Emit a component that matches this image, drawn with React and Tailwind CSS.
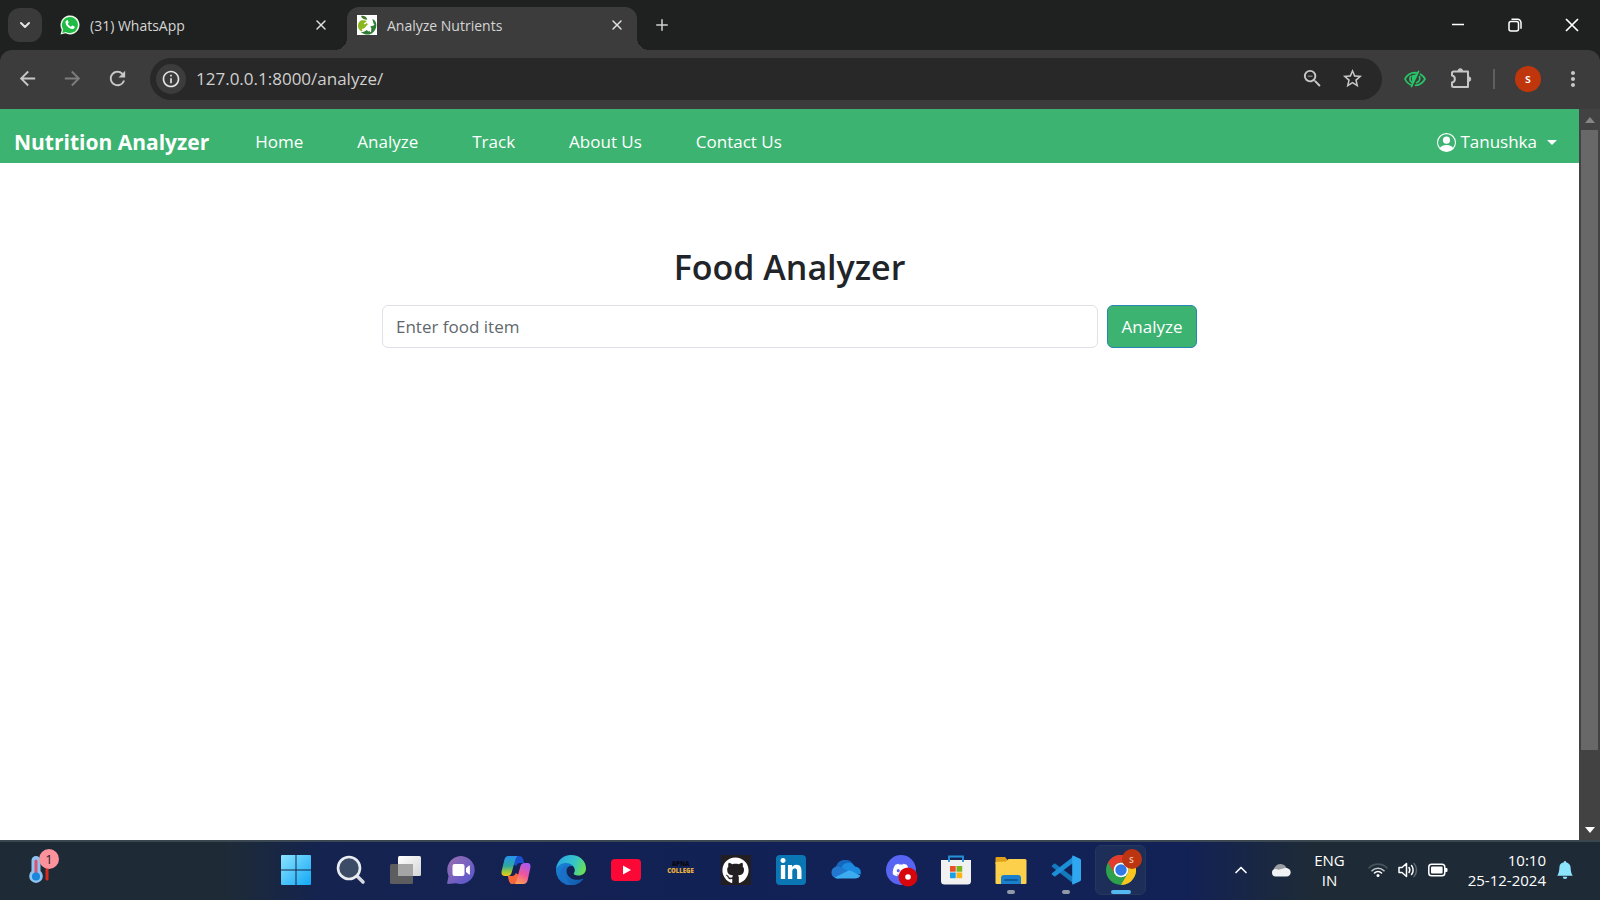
import React from "react";
import { BsPersonCircle, BsBellFill } from "react-icons/bs";
import { FaGithub, FaDiscord, FaLinkedinIn } from "react-icons/fa";
import {
  MdArrowBack,
  MdArrowForward,
  MdRefresh,
  MdZoomOut,
  MdStarOutline,
  MdMoreVert,
  MdInfoOutline,
} from "react-icons/md";
import { ChevronDown, ChevronUp, X, Plus } from "lucide-react";

function WhatsAppIcon() {
  return (
    <svg viewBox="0 0 20 20" className="size-5 shrink-0" aria-hidden="true">
      <path d="M0.5 19.5 1.8 14.7A9.5 9.5 0 1 1 5.4 18.2Z" fill="#e9fbe9" />
      <path d="M2.2 17.9 3.2 14.4A8 8 0 1 1 5.8 16.9Z" fill="#1fbb45" />
      <path
        d="M6.8 5.3c.3-.3.8-.3 1 .1l.8 1.8c.1.3 0 .5-.2.8l-.6.7c.7 1.4 1.8 2.4 3.3 3l.8-1c.2-.2.4-.3.7-.2l1.8.9c.3.1.4.3.3.6-.1 1.4-1.3 2.2-2.5 2.1-3.2-.4-6.300-3.400-6.700-6.300-.1-1 .5-2 1.300-2.500z"
        fill="#fff"
      />
    </svg>
  );
}

function RunnerAppleIcon() {
  return (
    <svg viewBox="0 0 20 20" className="size-5 shrink-0" aria-hidden="true">
      <rect width="20" height="20" fill="#fff" />
      <path d="M4 .8c3.200-.6 5.700 1 6.300 3.800C7 5 4.500 3.600 4 .8z" fill="#3c7a2a" />
      <path d="M1 11C1 7 3.500 5 6 5.200c2 .1 3 .6 4 .4L8.500 7.500 11 9l-3 3.500L4.500 16.500C2.500 15.500 1 13.500 1 11z" fill="#8ab61f" />
      <path d="M15.300 4c3 1 4.400 4 4 7-.4 4-3.500 7.800-7 8.500-3 .3-6-.3-8.300-2.500 2 .2 4-.5 5.500-2l2 1.500 2.500-1-.5-4 3.500-1.500z" fill="#2d7d32" />
      <circle cx="13.300" cy="5" r="1.500" fill="#fff" />
      <path
        d="M7.500 8.700 9.800 7.200l2.700 1-1.500 3.400 2.700 1.600-.2 3.300M10.800 11.500 9 13.800l-3.500.5M12.700 8.400l1.500 1.600 2.500-.5"
        fill="none"
        stroke="#fff"
        strokeWidth="1.3"
        strokeLinecap="round"
        strokeLinejoin="round"
      />
    </svg>
  );
}

function PuzzleIcon() {
  return (
    <svg viewBox="0 0 24 24" className="size-6" fill="none" stroke="currentColor" strokeWidth="2" strokeLinejoin="round" aria-hidden="true">
      <path d="M4.500 4.500h14.500v15.500H4.500a1.500 1.500 0 0 1-1.500-1.500v-3c3.800-.6 3.800-6.400 0-7V6a1.500 1.500 0 0 1 1.500-1.500z" />
      <path d="M9 4a2.300 2.300 0 0 1 4.600 0zM19.500 9.800a2.300 2.300 0 0 1 0 4.600z" fill="currentColor" strokeWidth="1" />
    </svg>
  );
}

function Tab({ icon, title, active }) {
  return (
    <div
      className={
        active
          ? "flex h-[43px] w-[290px] items-start rounded-t-xl bg-[#3c3c3c] pl-2.5 pr-2.5 pt-2"
          : "flex h-[43px] w-[279px] items-start pl-1 pr-1 pt-2"
      }
    >
      {icon}
      <button type="button" className="ml-2.5 flex-1 text-left text-sm leading-[22px] text-[#d5d5d5]">
        {title}
      </button>
      <button type="button" aria-label={"Close " + title} className="flex size-5 items-center justify-center text-[#e0e0e0]">
        <X className="size-4" strokeWidth={2.2} />
      </button>
    </div>
  );
}

function TabStrip() {
  return (
    <header className="flex h-[50px] items-end bg-[#1f2120]">
      <button
        type="button"
        aria-label="Search tabs"
        className="ml-2 mb-2 flex size-[34px] items-center justify-center rounded-xl bg-[#3a3a3a] text-[#e3e3e3]"
      >
        <ChevronDown className="size-4" strokeWidth={3} />
      </button>
      <div className="ml-3.5 flex items-end">
        <Tab icon={<WhatsAppIcon />} title="(31) WhatsApp" />
        <span className="size-3 bg-[radial-gradient(circle_at_0_0,transparent_12px,#3c3c3c_12px)]" />
        <Tab icon={<RunnerAppleIcon />} title="Analyze Nutrients" active />
        <span className="size-3 bg-[radial-gradient(circle_at_100%_0,transparent_12px,#3c3c3c_12px)]" />
      </div>
      <button type="button" aria-label="New tab" className="mb-4 ml-1 flex size-[18px] items-center justify-center text-[#d0d0d0]">
        <Plus className="size-[18px] shrink-0" strokeWidth={2} />
      </button>
      <div className="ml-auto flex h-[50px] text-white">
        <button type="button" aria-label="Minimize" className="flex w-[57px] items-center justify-center">
          <svg viewBox="0 0 14 14" className="size-3.5" fill="none" stroke="currentColor" strokeWidth="1.5">
            <path d="M1 6.500h12" />
          </svg>
        </button>
        <button type="button" aria-label="Restore" className="flex w-[57px] items-center justify-center">
          <svg viewBox="0 0 14 14" className="size-3.5" fill="none" stroke="currentColor" strokeWidth="1.5">
            <rect x="1" y="3.500" width="9.500" height="9.500" rx="2" />
            <path d="M3.500 1.200h6A3.500 3.500 0 0 1 13 4.700v6" />
          </svg>
        </button>
        <button type="button" aria-label="Close window" className="flex w-[57px] items-center justify-center">
          <svg viewBox="0 0 14 14" className="size-3.5" fill="none" stroke="currentColor" strokeWidth="1.7">
            <path d="M1 1l12 12M13 1 1 13" />
          </svg>
        </button>
      </div>
    </header>
  );
}

function Toolbar() {
  return (
    <div className="bg-[#1f2120]">
      <div className="flex h-[59px] items-center rounded-t-xl bg-[#3c3c3c] pb-0.5 pl-4 pr-[15px] text-[#c7c7c7]">
        <div className="flex items-center gap-[22px]">
          <button type="button" aria-label="Back"><MdArrowBack className="size-[23px]" /></button>
          <button type="button" aria-label="Forward" className="text-[#7d7d7d]"><MdArrowForward className="size-[23px]" /></button>
          <button type="button" aria-label="Reload"><MdRefresh className="size-[23px]" /></button>
        </div>
        <div className="ml-[21px] flex h-[42px] flex-1 items-center rounded-full bg-[#282828] pl-1.5 pr-[18px]">
          <button type="button" aria-label="Site information" className="flex size-[30px] items-center justify-center rounded-full bg-[#3c3c3c] text-[#e3e3e3]">
            <MdInfoOutline className="size-5" />
          </button>
          <input
            type="text"
            aria-label="Address"
            defaultValue="127.0.0.1:8000/analyze/"
            className="ml-2.5 min-w-0 flex-1 bg-transparent text-[17px] leading-6 text-[#d0d0d0] outline-none"
          />
          <button type="button" aria-label="Zoom"><MdZoomOut className="size-[23px]" /></button>
          <button type="button" aria-label="Bookmark" className="ml-[17px]"><MdStarOutline className="size-[23px]" /></button>
        </div>
        <div className="ml-[22px] flex items-center">
          <button type="button" aria-label="Hide extension">
            <svg viewBox="0 0 22 18" className="h-[18px] w-[22px]" fill="none" stroke="#27c768" strokeWidth="1.7" strokeLinecap="round">
              <path d="M8 15.300C4.500 14.300 2.300 11.800 1 9 3.200 4.800 6.800 2.600 11 2.600l2 .2" />
              <path d="M16.500 4.200C18.600 5.400 20 7 21 9c-2.200 4-5.500 6.200-9.500 6.400" />
              <path d="M6.500 6.500c-1 2.200-.5 4.600 1.500 6" />
              <path d="M15.500 6.500c.8 2.700-.5 5.300-3 6.200" />
              <path d="M7.500 5.500 13 4 8.500 14z" fill="#27c768" stroke="none" />
              <path d="M14.500 1.500 7.500 16.500" />
            </svg>
          </button>
          <button type="button" aria-label="Extensions" className="ml-[23px]"><PuzzleIcon /></button>
          <span className="ml-5 h-5 w-0.5 bg-[#5f5f5f]" />
          <button type="button" aria-label="Profile" className="ml-5 flex size-[26px] items-center justify-center rounded-full bg-[#c0360c] text-xs font-semibold leading-4 text-white">
            s
          </button>
          <button type="button" aria-label="Menu" className="ml-5"><MdMoreVert className="size-6" /></button>
        </div>
      </div>
    </div>
  );
}

const NAV_ITEMS = ["Home", "Analyze", "Track", "About Us", "Contact Us"];

function SiteNav() {
  return (
    <nav className="flex h-[54px] items-center bg-[#3cb371] pl-3.5 pr-[22px] pt-3 text-white">
      <a href="#brand" className="whitespace-nowrap text-[21px] font-bold leading-8">Nutrition Analyzer</a>
      <ul className="ml-[46px] flex items-center gap-[54px]">
        {NAV_ITEMS.map((item) => (
          <li key={item}>
            <a href="#nav" className="whitespace-nowrap text-[17px] leading-7">{item}</a>
          </li>
        ))}
      </ul>
      <button type="button" className="ml-auto flex items-center text-[17px] leading-7">
        <BsPersonCircle className="mr-1 size-[19px]" />
        Tanushka
        <svg viewBox="0 0 10 5" className="ml-2.5 h-[5px] w-2.5" aria-hidden="true">
          <path d="M0 0h10L5 5z" fill="currentColor" />
        </svg>
      </button>
    </nav>
  );
}

function Analyzer() {
  return (
    <section className="mx-auto w-full max-w-[815px] pt-20">
      <h1 className="text-center text-[34px] font-semibold leading-[48px] text-[#212529]">Food Analyzer</h1>
      <form className="mt-3.5 flex gap-[9px]" onSubmit={(e) => e.preventDefault()}>
        <input
          type="text"
          aria-label="Food item"
          placeholder="Enter food item"
          className="h-[43px] min-w-0 flex-1 rounded-md border border-[#dee2e6] px-[13px] text-[17px] leading-7 text-[#212529] outline-none placeholder:text-[#62676c]"
        />
        <button type="submit" className="h-[43px] w-[90px] rounded-md border border-[#2a86b0] bg-[#3cb371] text-[17px] leading-7 text-white">
          Analyze
        </button>
      </form>
    </section>
  );
}

function ScrollBar() {
  return (
    <div className="flex w-[21px] flex-col items-center bg-[#424242]">
      <button type="button" aria-label="Scroll up" className="flex h-[21px] w-full items-center justify-center">
        <svg viewBox="0 0 10 6" className="h-1.5 w-2.5"><path d="M0 6h10L5 0z" fill="#858585" /></svg>
      </button>
      <div className="flex w-[17px] flex-1 flex-col">
        <div className="h-[90%] bg-[#686868]" />
      </div>
      <button type="button" aria-label="Scroll down" className="flex h-[21px] w-full items-center justify-center">
        <svg viewBox="0 0 10 6" className="h-1.5 w-2.5"><path d="M0 0h10L5 6z" fill="#fff" /></svg>
      </button>
    </div>
  );
}

function StartIcon() {
  return (
    <svg viewBox="0 0 30 30" className="size-[30px]">
      <defs>
        <linearGradient id="start" x1="0" y1="0" x2="1" y2="1">
          <stop offset="0" stopColor="#8be3ff" />
          <stop offset="1" stopColor="#12a8f5" />
        </linearGradient>
      </defs>
      <path d="M1 0h13.500v14.500H0V1a1 1 0 0 1 1-1zM15.500 0H29a1 1 0 0 1 1 1v13.500H15.500zM0 15.500h14.500V30H1a1 1 0 0 1-1-1zM15.500 15.500H30V29a1 1 0 0 1-1 1H15.500z" fill="url(#start)" />
    </svg>
  );
}

function SearchIcon() {
  return (
    <svg viewBox="0 0 30 30" className="size-[30px]">
      <path d="m20 20 7 7" stroke="#d5d9e0" strokeWidth="3.6" strokeLinecap="round" />
      <circle cx="13" cy="13" r="11" fill="#3d4c66" stroke="#e9ecf1" strokeWidth="2.6" />
    </svg>
  );
}

function TaskViewIcon() {
  return (
    <svg viewBox="0 0 31 30" className="h-[30px] w-[31px]">
      <defs>
        <linearGradient id="tvf" x1="0" y1="0" x2="1" y2="1">
          <stop offset="0" stopColor="#fff" />
          <stop offset="1" stopColor="#d5d5d5" />
        </linearGradient>
      </defs>
      <rect x="0" y="9" width="23" height="20" rx="1.5" fill="#5d5d60" />
      <rect x="8" y="1" width="23" height="20" rx="1.5" fill="url(#tvf)" />
      <path d="M8 9h15v12H9.500A1.500 1.500 0 0 1 8 19.500z" fill="#a5a5a6" />
    </svg>
  );
}

function MeetIcon() {
  return (
    <svg viewBox="0 0 30 30" className="size-[30px]">
      <defs>
        <linearGradient id="meet" x1="0" y1="0" x2="1" y2="1">
          <stop offset="0" stopColor="#9a6fb0" />
          <stop offset="1" stopColor="#5454cf" />
        </linearGradient>
      </defs>
      <path d="M15 1a14 14 0 1 1-5 27.200L2 29c-.8 0-1-.6-.8-1.200L2.600 21A14 14 0 0 1 15 1z" fill="url(#meet)" />
      <rect x="6.500" y="9" width="12" height="12" rx="2" fill="#fff" />
      <path d="M20 13.200 23 10.600c.5-.3.900-.1.900.5v8c0 .6-.4.8-.9.500L20 17z" fill="#fff" />
    </svg>
  );
}

function CopilotIcon() {
  return (
    <svg viewBox="0 0 30 28" className="h-[28px] w-[30px]">
      <defs>
        <linearGradient id="cpa" x1="0" y1="0" x2="0" y2="1">
          <stop offset="0" stopColor="#2693ee" />
          <stop offset="0.5" stopColor="#2ea8a0" />
          <stop offset="0.8" stopColor="#a3ca35" />
          <stop offset="1" stopColor="#f2c41c" />
        </linearGradient>
        <linearGradient id="cpb" x1="0.7" y1="0" x2="0.3" y2="1">
          <stop offset="0" stopColor="#a95af0" />
          <stop offset="0.5" stopColor="#f0559c" />
          <stop offset="1" stopColor="#ffa052" />
        </linearGradient>
      </defs>
      <path d="M18 0c2.500 0 3.500 1.200 4.200 3.600L23.200 7H19c-2 0-3 .8-3.600 3L12 8l1-6z" fill="#1a4fd0" />
      <path d="M12 28c-2.500 0-3.500-1.200-4.200-3.600L6.800 20H11c2 0 3-.8 3.600-3l3.400 2-1 7z" fill="#f5663b" />
      <path d="M7.500 0H18c-2 0-3 1.500-3.600 3.600L10.500 17c-.8 2.200-2 3-4 3H4C.8 20 0 18 .7 15L3.300 4C4 1.300 5.200 0 7.500 0z" fill="url(#cpa)" />
      <path d="M22.500 28H12c2 0 3-1.500 3.600-3.600L19.500 10c.8-2.200 2-3 4-3H26c3.200 0 4 2 3.300 5l-2.600 12c-.7 2.700-1.900 4-4.200 4z" fill="url(#cpb)" />
    </svg>
  );
}

function EdgeIcon() {
  return (
    <svg viewBox="0 0 30 30" className="size-[30px]">
      <defs>
        <linearGradient id="edt" x1="0" y1="0.3" x2="1" y2="0.6">
          <stop offset="0" stopColor="#2aa7e8" />
          <stop offset="0.6" stopColor="#36c6c4" />
          <stop offset="1" stopColor="#6be052" />
        </linearGradient>
        <linearGradient id="edb" x1="0" y1="0" x2="1" y2="1">
          <stop offset="0" stopColor="#1a86dc" />
          <stop offset="1" stopColor="#1257a8" />
        </linearGradient>
      </defs>
      <path d="M0 15C1 9 5 6.500 10 6.500c4 0 7 2 8 5-4-1.500-7.500.5-7.500 4.500 0 6 6.500 10 14 8.500 1.500-.4 3.300-1.500 2.500 0A15 15 0 0 1 0 15z" fill="url(#edb)" />
      <path d="M10.500 14c-3 4-1.500 13 5.500 16C8 29.500 4 24 4.500 18.500 5 14 8 11 12 10.800c-.8.8-1.300 2-1.500 3.200z" fill="#1b6fc9" />
      <path d="M0 14.500C.5 6 7 0 15 0c9 0 15 6 15 13.500 0 4.500-3.500 7-7.500 7-3.200 0-5.500-1-4.500-2.500 2.500-3-.5-10-8-10-4.500 0-8.500 2.500-10 6.500z" fill="url(#edt)" />
    </svg>
  );
}

function YoutubeIcon() {
  return (
    <svg viewBox="0 0 30 22" className="h-[22px] w-[30px]">
      <rect width="30" height="22" rx="4" fill="#fb0837" />
      <path d="M12 6.500v9l8-4.500z" fill="#fff" />
    </svg>
  );
}

function CollegeIcon() {
  return (
    <span className="flex flex-col items-center pb-1 font-['Open_Sans',sans-serif] text-[6px] font-extrabold leading-[7px]">
      <span className="text-[#05070f]">APNA</span>
      <span className="text-[#e8b040]">COLLEGE</span>
    </span>
  );
}

function OneDriveIcon() {
  return (
    <svg viewBox="0 0 30 20" className="h-5 w-[30px]">
      <path d="M7 18.500A6.500 6.500 0 0 1 5 6.500 9.500 9.500 0 0 1 22.500 5L15 12z" fill="#1467bd" />
      <path d="M10.500 7.500A7.500 7.500 0 0 1 24 6.500a6 6 0 0 1 5.500 8L20 13z" fill="#1a8be0" />
      <path d="M7 18.500C3 18.500.5 16 .5 12.500.5 9 3 6.500 6.500 6.500c1.600 0 3 .4 4.500 1.300l9 5.200L8 18.500z" fill="#2277cf" />
      <path d="m3.500 17.500 13-6.500c1.500-.7 3-.5 4.500.3l8.300 4.200c-.8 2-2.600 3-5.300 3H7c-1.300 0-2.500-.3-3.500-1z" fill="#3cabf0" />
    </svg>
  );
}

function DiscordIcon() {
  return (
    <span className="relative flex size-[30px] items-center justify-center rounded-full bg-[#5865f2] text-white">
      <FaDiscord className="size-[18px]" />
      <svg viewBox="0 0 20 20" className="absolute -bottom-0.5 -right-0.5 size-5">
        <circle cx="10" cy="10" r="9.5" fill="#d6060c" />
        <circle cx="10" cy="10" r="2.8" fill="#fff" />
      </svg>
    </span>
  );
}

function StoreIcon() {
  return (
    <svg viewBox="0 0 30 30" className="size-[30px]">
      <path d="M8 7V1.500h14V7" fill="none" stroke="#2492d8" strokeWidth="1.8" />
      <path d="M0 5h30v21a3.500 3.500 0 0 1-3.500 3.500h-23A3.500 3.500 0 0 1 0 26z" fill="#f1f1f1" />
      <path d="M8 7V4.500M22 7V4.500" stroke="#2492d8" strokeWidth="1.8" />
      <rect x="9" y="11" width="5.7" height="5.7" fill="#e8502a" />
      <rect x="15.500" y="11" width="5.7" height="5.7" fill="#7ab51d" />
      <rect x="9" y="17.500" width="5.7" height="5.7" fill="#1d9fe6" />
      <rect x="15.500" y="17.500" width="5.7" height="5.7" fill="#fbb615" />
    </svg>
  );
}

function ExplorerIcon() {
  return (
    <svg viewBox="0 0 32 28" className="h-[28px] w-8">
      <path d="M1.500 1h8.500l3 3.500L10 8H.5V2a1 1 0 0 1 1-1z" fill="#e0a01a" />
      <path d="M11 5.500 13.500 3H30a1.500 1.500 0 0 1 1.500 1.500V27a1 1 0 0 1-1 1h-29a1 1 0 0 1-1-1V6z" fill="#fcd04a" />
      <path d="M6 28v-6a3 3 0 0 1 3-3h14a3 3 0 0 1 3 3v6z" fill="#1a80ce" />
      <path d="M10 24h12" stroke="#0c5a9c" strokeWidth="1.8" strokeLinecap="round" />
    </svg>
  );
}

function CodeIcon() {
  return (
    <svg viewBox="0 0 30 30" className="size-[30px]">
      <path d="M1 10.500 3 8.700c.5-.4 1-.4 1.500 0L23 22.800V29L.9 11.800c-.4-.4-.4-.9.1-1.300z" fill="#1479bd" />
      <path d="M1 19.500 3 21.300c.5.4 1 .4 1.500 0L23 7.200V1L.9 18.200c-.4.4-.4.9.1 1.300z" fill="#1c8fd6" />
      <path d="M22 .6 28.500 3.500c.9.4 1.500 1 1.500 2v19c0 1-.6 1.600-1.500 2L22 29.500c-.6.2-.8 0-.8-.6V1.200c0-.6.3-.8.8-.6z" fill="#2fa8f0" />
    </svg>
  );
}

function ChromeIcon() {
  return (
    <span className="relative">
      <svg viewBox="0 0 30 30" className="size-[30px]">
        <circle cx="15" cy="15" r="15" fill="#2da14c" />
        <path d="M2 7.500A15 15 0 0 1 28 7.500H15a7.500 7.500 0 0 0-6.500 11.200z" fill="#e33b2e" />
        <path d="M28 7.500A15 15 0 0 1 15 30l6.500-11.300A7.500 7.500 0 0 0 15 7.500z" fill="#fcc61e" />
        <circle cx="15" cy="15" r="7.3" fill="#fff" />
        <circle cx="15" cy="15" r="5.7" fill="#3079e6" />
      </svg>
      <span className="absolute -right-1.5 -top-1.5 flex size-5 items-center justify-center rounded-full bg-[#bd3510] text-[10px] font-semibold leading-3 text-[#eab9a8]">
        s
      </span>
    </span>
  );
}

const APPS = [
  { name: "Start", icon: <StartIcon /> },
  { name: "Search", icon: <SearchIcon /> },
  { name: "Task view", icon: <TaskViewIcon /> },
  { name: "Chat", icon: <MeetIcon /> },
  { name: "Copilot", icon: <CopilotIcon /> },
  { name: "Edge", icon: <EdgeIcon /> },
  { name: "YouTube", icon: <YoutubeIcon /> },
  { name: "Apna College", icon: <CollegeIcon /> },
  {
    name: "GitHub",
    icon: (
      <span className="flex size-[30px] items-center justify-center bg-[#231f20] text-white">
        <FaGithub className="size-[27px]" />
      </span>
    ),
  },
  {
    name: "LinkedIn",
    icon: (
      <span className="flex size-[30px] items-center justify-center rounded-[4px] bg-[#0a76b4] text-white">
        <FaLinkedinIn className="size-6" />
      </span>
    ),
  },
  { name: "OneDrive", icon: <OneDriveIcon /> },
  { name: "Discord", icon: <DiscordIcon /> },
  { name: "Store", icon: <StoreIcon /> },
  { name: "File Explorer", icon: <ExplorerIcon />, running: true },
  { name: "Code", icon: <CodeIcon />, running: true },
  { name: "Chrome", icon: <ChromeIcon />, active: true },
];

function AppButton({ app }) {
  return (
    <button type="button" aria-label={app.name} className="relative flex h-14 w-[55px] items-center justify-center">
      {app.active && <span className="absolute inset-x-0.5 inset-y-[3px] rounded-md border border-[#26375e] bg-[#1d2e58]" />}
      <span className="relative flex items-center justify-center">{app.icon}</span>
      {app.running && <span className="absolute bottom-1 h-1 w-2 rounded-full bg-[#9299a8]" />}
      {app.active && <span className="absolute bottom-1 h-1 w-5 rounded-full bg-[#55b8f0]" />}
    </button>
  );
}

function WeatherIcon() {
  return (
    <span className="relative">
      <svg viewBox="0 0 22 30" className="h-[30px] w-[22px]">
        <path d="M18 11v13" stroke="#d42a20" strokeWidth="3" strokeLinecap="round" />
        <path d="M7 1a4.500 4.500 0 0 1 4.500 4.500V16a6.800 6.800 0 1 1-9 0V5.500A4.500 4.500 0 0 1 7 1z" fill="#8fc4f2" />
        <path d="M7 6v14" stroke="#d8536c" strokeWidth="3" strokeLinecap="round" />
        <circle cx="7" cy="21.5" r="4" fill="#1a86dc" />
      </svg>
      <span className="absolute -right-2 -top-1.5 flex size-5 items-center justify-center rounded-full bg-[#fb929c] text-[13px] leading-4 text-[#1d1d1d]">
        1
      </span>
    </span>
  );
}

function Tray() {
  return (
    <div className="ml-auto flex shrink-0 items-center justify-end whitespace-nowrap pr-[26px] text-[15px] leading-5 text-white">
      <button type="button" aria-label="Show hidden icons"><ChevronUp className="size-5" strokeWidth={2} /></button>
      <svg viewBox="0 0 20 14" className="ml-5 h-3.5 w-5" aria-hidden="true">
        <path d="M4 10a4 4 0 0 1 0-6A6.500 6.500 0 0 1 15.500 5L9 10z" fill="#9a9da1" />
        <path d="M4.500 13.500a3.800 3.800 0 0 1-.5-7.500c1.500-.2 2.500.3 3.500.8L14 5c3-.3 5.700 1.500 5.700 4.300 0 2.500-1.700 4.200-4.200 4.200z" fill="#f1f2f3" />
      </svg>
      <button type="button" className="ml-[23px] flex flex-col items-center">
        <span>ENG</span>
        <span>IN</span>
      </button>
      <button type="button" aria-label="Network, sound and battery" className="ml-[23px] flex items-center gap-2.5">
        <svg viewBox="0 0 20 16" className="h-4 w-5" fill="none" strokeWidth="1.6" strokeLinecap="round">
          <path d="M1 6a12.500 12.500 0 0 1 18 0" stroke="#46525e" />
          <path d="M4 8.800a8.500 8.500 0 0 1 12 0" stroke="#c3c8cd" />
          <path d="M6.500 11a5 5 0 0 1 7 0" stroke="#fff" />
          <circle cx="10" cy="13.5" r="1.5" fill="#fff" />
        </svg>
        <svg viewBox="0 0 20 16" className="h-4 w-5" fill="none" strokeWidth="1.5" strokeLinecap="round" strokeLinejoin="round" stroke="#fff">
          <path d="M1 5.500h3L8.500 1.500v13L4 10.500H1z" />
          <path d="M11 5.500c1 1.500 1 3.500 0 5M13.500 3.500c2.200 2.500 2.200 6.500 0 9" />
          <path d="M16 1.500c3.300 3.500 3.300 9.500 0 13" stroke="#5b6672" />
        </svg>
        <svg viewBox="0 0 20 14" className="h-3.5 w-5" aria-hidden="true">
          <rect x="0.8" y="1.2" width="16" height="11.6" rx="2.8" fill="none" stroke="#fff" strokeWidth="1.5" />
          <rect x="3" y="3.5" width="11.6" height="7" rx="1" fill="#fff" />
          <path d="M17 5h1.500a1 1 0 0 1 1 1v2a1 1 0 0 1-1 1H17z" fill="#fff" />
        </svg>
      </button>
      <button type="button" className="ml-5 flex flex-col items-end">
        <span>10:10</span>
        <span>25-12-2024</span>
      </button>
      <button type="button" aria-label="Notifications" className="ml-2.5 text-[#8ce4fd]"><BsBellFill className="size-[18px]" /></button>
    </div>
  );
}

function Taskbar() {
  return (
    <footer className="flex h-[60px] items-center border-t-2 border-[#3a4650] bg-[linear-gradient(90deg,#1e2b36_14%,#14234f_20%,#122156_50%,#122156_74%,#1e2b36_82%)] pb-0.5">
      <div className="flex w-[268px] items-center pl-[29px]">
        <button type="button" aria-label="Widgets"><WeatherIcon /></button>
      </div>
      <div className="flex">
        {APPS.map((app) => (
          <AppButton key={app.name} app={app} />
        ))}
      </div>
      <Tray />
    </footer>
  );
}

export default function App() {
  return (
    <div className="flex min-h-screen flex-col bg-white font-['Open_Sans','Noto_Sans',sans-serif]">
      <TabStrip />
      <Toolbar />
      <div className="flex flex-1">
        <main className="flex min-w-0 flex-1 flex-col bg-white">
          <SiteNav />
          <Analyzer />
        </main>
        <ScrollBar />
      </div>
      <Taskbar />
    </div>
  );
}
